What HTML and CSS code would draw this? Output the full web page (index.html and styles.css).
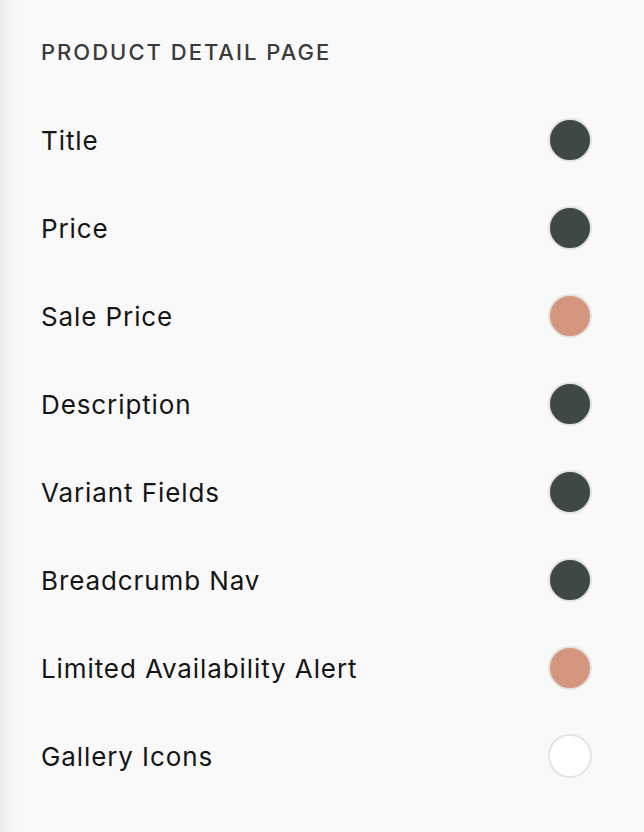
FILE: index.html
```html
<!DOCTYPE html>
<html>
<head>
<meta charset="utf-8">
<link rel="stylesheet" href="styles.css">
</head>
<body>
<div class="panel">
  <h2 class="heading">Product Detail Page</h2>
  <ul class="list">
    <li class="row"><span class="label">Title</span><span class="swatch dark"></span></li>
    <li class="row"><span class="label">Price</span><span class="swatch dark"></span></li>
    <li class="row"><span class="label">Sale Price</span><span class="swatch salmon"></span></li>
    <li class="row"><span class="label">Description</span><span class="swatch dark"></span></li>
    <li class="row"><span class="label">Variant Fields</span><span class="swatch dark"></span></li>
    <li class="row"><span class="label">Breadcrumb Nav</span><span class="swatch dark"></span></li>
    <li class="row"><span class="label">Limited Availability Alert</span><span class="swatch salmon"></span></li>
    <li class="row"><span class="label">Gallery Icons</span><span class="swatch white"></span></li>
  </ul>
</div>
</body>
</html>
```
FILE: styles.css
```css
html, body {
  margin: 0;
  padding: 0;
  height: 100%;
}
body {
  background: #f9f9f9;
  font-family: Inter, "Liberation Sans", Arial, sans-serif;
}
.panel {
  min-height: 832px;
  box-sizing: border-box;
  padding: 36px 52px 0 41px;
  background: linear-gradient(to right, #ececec 0px, #f6f6f6 10px, #f9f9f9 22px);
}
.heading {
  margin: 0;
  font-size: 22px;
  font-weight: 500;
  text-transform: uppercase;
  letter-spacing: 2px;
  color: #3b3b3b;
  line-height: 32px;
}
.list {
  list-style: none;
  margin: 28px 0 0 0;
  padding: 0;
}
.row {
  display: flex;
  align-items: center;
  justify-content: space-between;
  height: 88px;
}
.label {
  font-size: 26px;
  letter-spacing: 0.9px;
  color: #151515;
}
.swatch {
  width: 40px;
  height: 40px;
  border-radius: 50%;
  border: 2px solid #e4e4e4;
}
.dark { background: #3e4845; }
.salmon { background: #d4967d; }
.white { background: #ffffff; }
```
